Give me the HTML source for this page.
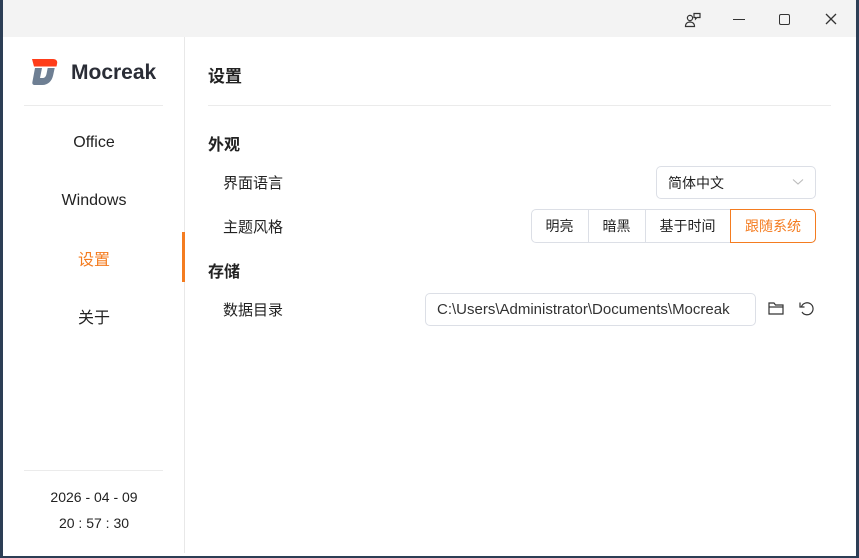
<!DOCTYPE html>
<html><head><meta charset="utf-8"><style>
*{margin:0;padding:0;box-sizing:border-box}
body{width:859px;height:558px;background:#fff;font-family:"Liberation Sans","Noto Sans CJK SC",sans-serif;color:#222;position:relative;overflow:hidden}
.a{position:absolute}
.t{position:absolute;white-space:nowrap}
</style></head><body>
<div class="a" style="left:0;top:0;width:859px;height:558px;border-left:3px solid #2c3e55;border-right:3px solid #2c3e55;border-bottom:2px solid #2c3e55"></div>
<div class="a" style="left:3px;top:0;width:853px;height:37px;background:#f3f3f3"></div>
<svg class="a" style="left:684px;top:11px" width="18" height="18" viewBox="0 0 18 18" fill="none" stroke="#333" stroke-width="1.2"><circle cx="6" cy="7" r="2.6"/><path d="M1.5 15.5c0-3 2-4.5 4.5-4.5s4.5 1.5 4.5 4.5z"/><path d="M10 2.5h6v4h-3l-1.5 1.5v-1.5H10z"/></svg>
<div class="a" style="left:733px;top:19px;width:12px;height:1.3px;background:#333"></div>
<div class="a" style="left:779px;top:14px;width:11px;height:11px;border:1.3px solid #333;border-radius:2px"></div>
<svg class="a" style="left:825px;top:13px" width="12" height="12" viewBox="0 0 12 12" stroke="#333" stroke-width="1.3"><path d="M1 1L11 11M11 1L1 11"/></svg>
<div class="a" style="left:184px;top:37px;width:1px;height:516px;background:#e8e8e8"></div>
<svg class="a" style="left:30px;top:58px" width="30" height="28" viewBox="0 0 30 28"><path d="M2 1h21c3 0 5 2 4 5l-0.5 2.5H4z" fill="#ff3d1a"/><path d="M5 10h7l-2 10h3c2 0 3-2 3.5-4l1.2-6h7l-1.5 7c-1.2 6-5 10-11 10H5c-2 0-3-1-2.6-3z" fill="#6e7f93"/></svg>
<div class="t" style="left:71px;top:61px;font-size:21px;font-weight:bold;color:#2a2d36">Mocreak</div>
<div class="a" style="left:24px;top:105px;width:139px;height:1px;background:#ebebeb"></div>
<div class="t" style="left:4px;width:180px;text-align:center;top:134px;font-size:16px">Office</div>
<div class="t" style="left:4px;width:180px;text-align:center;top:192px;font-size:16px">Windows</div>
<div class="t" style="left:4px;width:180px;text-align:center;top:246px;font-size:16px;color:#f47c20">设置</div>
<div class="a" style="left:182px;top:232px;width:3px;height:50px;background:#f47c20"></div>
<div class="t" style="left:4px;width:180px;text-align:center;top:304px;font-size:16px">关于</div>
<div class="a" style="left:24px;top:470px;width:139px;height:1px;background:#ebebeb"></div>
<div class="t" style="left:4px;width:180px;text-align:center;top:489px;font-size:14px">2026 - 04 - 09</div>
<div class="t" style="left:4px;width:180px;text-align:center;top:515px;font-size:14px">20 : 57 : 30</div>
<div class="t" style="left:208px;top:62px;font-size:17px;font-weight:bold">设置</div>
<div class="a" style="left:208px;top:105px;width:623px;height:1px;background:#ebebeb"></div>
<div class="t" style="left:208px;top:131px;font-size:16px;font-weight:bold">外观</div>
<div class="t" style="left:223px;top:172px;font-size:15px">界面语言</div>
<div class="a" style="left:656px;top:166px;width:160px;height:33px;border:1px solid #dcdfe6;border-radius:5px"></div>
<div class="t" style="left:668px;top:173px;font-size:14px">简体中文</div>
<svg class="a" style="left:792px;top:178px" width="12" height="8" viewBox="0 0 12 8" fill="none" stroke="#bbb" stroke-width="1.1"><path d="M1 1.5l5 4.5 5-4.5"/></svg>
<div class="t" style="left:223px;top:216px;font-size:15px">主题风格</div>
<div class="a" style="left:531px;top:209px;width:285px;height:34px;border:1px solid #dcdfe6;border-radius:5px"></div>
<div class="a" style="left:588px;top:210px;width:1px;height:32px;background:#dcdfe6"></div>
<div class="a" style="left:645px;top:210px;width:1px;height:32px;background:#dcdfe6"></div>
<div class="a" style="left:730px;top:209px;width:86px;height:34px;border:1px solid #f47c20;border-radius:0 5px 5px 0"></div>
<div class="t" style="left:531px;width:57px;text-align:center;top:216px;font-size:14px">明亮</div>
<div class="t" style="left:588px;width:57px;text-align:center;top:216px;font-size:14px">暗黑</div>
<div class="t" style="left:645px;width:85px;text-align:center;top:216px;font-size:14px">基于时间</div>
<div class="t" style="left:730px;width:86px;text-align:center;top:216px;font-size:14px;color:#f47c20">跟随系统</div>
<div class="t" style="left:208px;top:258px;font-size:16px;font-weight:bold">存储</div>
<div class="t" style="left:223px;top:299px;font-size:15px">数据目录</div>
<div class="a" style="left:425px;top:293px;width:331px;height:33px;border:1px solid #dcdfe6;border-radius:5px"></div>
<div class="t" style="left:437px;top:301px;font-size:15px;color:#333">C:\Users\Administrator\Documents\Mocreak</div>
<svg class="a" style="left:768px;top:301px" width="17" height="15" viewBox="0 0 17 15" fill="none" stroke="#333" stroke-width="1.2"><path d="M1 13V2h5l1.5 2H15v9z"/><path d="M1 6h14"/></svg>
<svg class="a" style="left:798px;top:300px" width="17" height="17" viewBox="0 0 17 17" fill="none" stroke="#333" stroke-width="1.2"><path d="M3.5 6.5A6 6 0 1 1 4 12"/><path d="M2 2.5v4.5h4.5"/></svg>
</body></html>
